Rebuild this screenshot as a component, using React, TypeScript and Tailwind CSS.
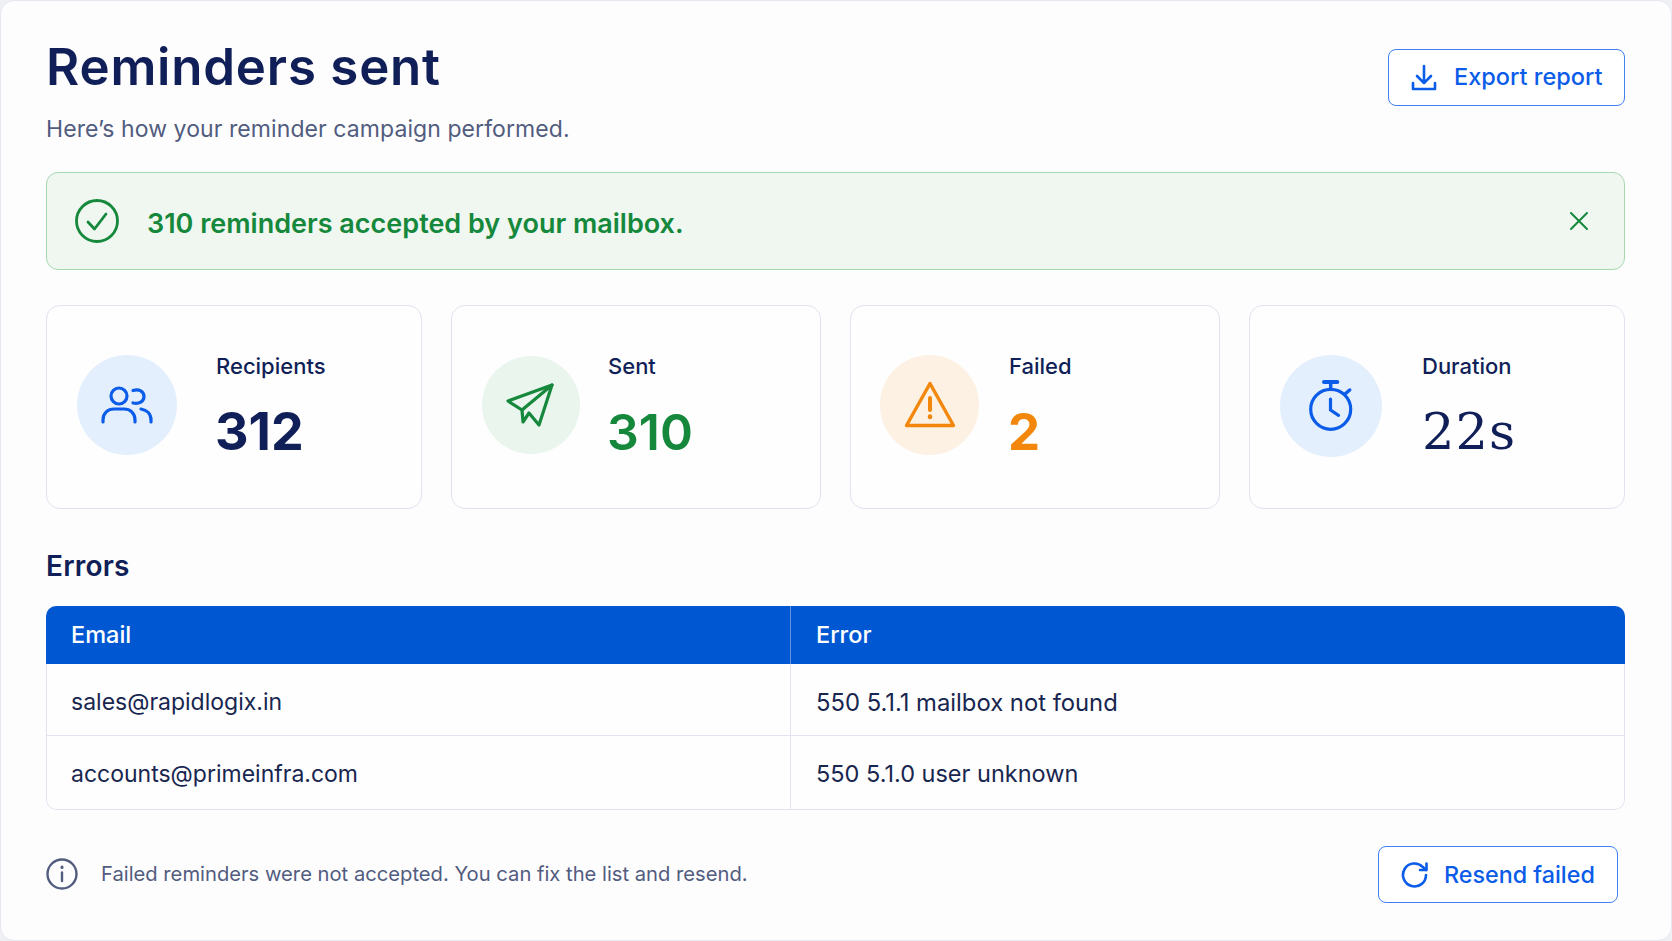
import React from 'react';

const navy = 'text-[#101f57]';

interface StatProps {
  label: string;
  value: string;
  textLeft: string;
  circle: string;
  valueClass: string;
  icon: React.ReactNode;
}

function UsersIcon() {
  return (
    <svg width="52" height="38" viewBox="0 0 52 38" fill="none" stroke="#0b5ce8" strokeWidth="3.2" strokeLinecap="round">
      <circle cx="18" cy="10" r="8" />
      <path d="M32 4.5c6-2 11 1 11 6s-5 8-11 6.5" />
      <path d="M2 36v-2c0-7 5-11 11-11h10c6 0 11 4 11 11v2" />
      <path d="M40 23c6 1 10 5 10 11v2" />
    </svg>
  );
}

function PlaneIcon() {
  return (
    <svg width="50" height="46" viewBox="0 0 50 46" fill="none" stroke="#15883c" strokeWidth="3.2" strokeLinejoin="round" strokeLinecap="round">
      <path d="M46 3 2 19l14 9 1 12 6-9 10 12z" />
      <path d="M46 3 16 28" />
    </svg>
  );
}

function AlertIcon() {
  return (
    <svg width="52" height="48" viewBox="0 0 52 48" fill="none" stroke="#f2870c" strokeWidth="3.4" strokeLinejoin="round" strokeLinecap="round">
      <path d="M26 2.5 2.5 44.5h47z" />
      <path d="M26 17v12" strokeWidth="4" />
      <path d="M26 35.5v.5" strokeWidth="4.5" />
    </svg>
  );
}

function TimerIcon() {
  return (
    <svg width="46" height="52" viewBox="0 0 46 52" fill="none" stroke="#0b5ce8" strokeWidth="3.2" strokeLinecap="round">
      <circle cx="22.7" cy="29.3" r="20" />
      <path d="M16 2h13.3" strokeWidth="4" />
      <path d="M22.7 3v6" strokeWidth="3.5" />
      <path d="m37 14 4.7-4" strokeWidth="3.5" />
      <path d="M22.5 19v11l8 5.3" />
    </svg>
  );
}

function Stat({ label, value, textLeft, circle, valueClass, icon }: StatProps) {
  return (
    <div className="h-[204px] rounded-[14px] border border-[#e1e3f0] bg-white/60">
      <div className="flex h-full items-start pt-[49px]">
        <div className={circle}>{icon}</div>
        <div className={textLeft}>
          <div className={`mt-[-4px] text-[22px] leading-[30px] font-medium ${navy}`}>{label}</div>
          <div className={valueClass}>{value}</div>
        </div>
      </div>
    </div>
  );
}

export default function App() {
  return (
    <div className="h-[941px] w-full overflow-hidden bg-[#eef0f4] font-['Inter',sans-serif]">
      <div className="h-[941px] w-full rounded-[14px] border border-[#e6e8ef] bg-[#fdfdfe] pt-[35px] pr-[46px] pl-[45px]">
        <header className="flex items-start justify-between">
          <div>
            <h1 className={`text-[51px] leading-[62px] font-semibold tracking-[0.8px] ${navy}`}>Reminders sent</h1>
            <p className="mt-[16px] text-[23px] leading-[30px] tracking-[0.08px] text-[#525c7e]">Here’s how your reminder campaign performed.</p>
          </div>
          <button className="mt-[13px] flex h-[57px] w-[237px] items-center rounded-[8px] border-[1.5px] border-[#3f80f3] bg-white pl-[21px] text-[23.5px] font-medium text-[#0b5ce8]">
            <svg width="28" height="28" viewBox="0 0 28 28" fill="none" stroke="#0b5ce8" strokeWidth="2.6" strokeLinecap="round" strokeLinejoin="round">
              <path d="M14 2v17M7 12l7 7 7-7" />
              <path d="M3 19v6h22v-6" />
            </svg>
            <span className="ml-[16px] pb-[2px]">Export report</span>
          </button>
        </header>

        <div className="mt-[28px] flex h-[98px] items-center rounded-[12px] border border-[#a6d8b0] bg-[#eff7f0] pr-[35px] pl-[28px]">
          <svg width="44" height="44" viewBox="0 0 44 44" fill="none" stroke="#15883c" strokeWidth="2.8" strokeLinecap="round" strokeLinejoin="round">
            <circle cx="22" cy="22" r="20.5" />
            <path d="m13 23 6.5 7L31 15" />
          </svg>
          <span className="ml-[28px] pt-[7px] text-[27px] font-semibold text-[#15883c]">310 reminders accepted by your mailbox.</span>
          <svg className="ml-auto" width="20" height="20" viewBox="0 0 20 20" fill="none" stroke="#15883c" strokeWidth="2" strokeLinecap="round">
            <path d="m2 2 16 16M18 2 2 18" />
          </svg>
        </div>

        <div className="mt-[35px] grid grid-cols-[376px_370px_370px_376px] justify-between">
          <Stat
            label="Recipients"
            value="312"
            icon={<UsersIcon />}
            circle="ml-[30px] flex h-[100px] w-[100px] shrink-0 items-center justify-center rounded-full bg-[#e4effd]"
            textLeft="ml-[39px]"
            valueClass={`mt-[20px] -ml-[1px] text-[52px] leading-[62px] font-bold ${navy}`}
          />
          <Stat
            label="Sent"
            value="310"
            icon={<PlaneIcon />}
            circle="mt-[1px] ml-[30px] flex h-[98px] w-[98px] shrink-0 items-center justify-center rounded-full bg-[#eaf5ed]"
            textLeft="ml-[28px]"
            valueClass="mt-[20px] -ml-[1px] text-[50px] leading-[62px] font-semibold text-[#15883c]"
          />
          <Stat
            label="Failed"
            value="2"
            icon={<AlertIcon />}
            circle="ml-[29px] flex h-[100px] w-[99px] shrink-0 items-center justify-center rounded-full bg-[#fdf1e4]"
            textLeft="ml-[30px]"
            valueClass="mt-[20px] -ml-[1px] text-[51px] leading-[62px] font-bold text-[#f2870c]"
          />
          <Stat
            label="Duration"
            value="22s"
            icon={<TimerIcon />}
            circle="ml-[30px] flex h-[102px] w-[102px] shrink-0 items-center justify-center rounded-full bg-[#e4effd]"
            textLeft="ml-[40px]"
            valueClass={`mt-[20px] font-['DejaVu_Serif',serif] text-[51px] leading-[62px] tracking-[1px] ${navy}`}
          />
        </div>

        <h2 className={`mt-[39px] text-[28px] leading-[36px] font-semibold tracking-[0.2px] ${navy}`}>Errors</h2>

        <div className="mt-[22px] overflow-hidden rounded-[10px] bg-white/60">
          <div className="grid h-[58px] grid-cols-[745px_1fr] bg-[#0057d2] text-[23.5px] font-medium text-white">
            <div className="flex items-center border-r border-[#5f93e2] pl-[25px]">Email</div>
            <div className="flex items-center pl-[25px]">Error</div>
          </div>
          <div className="grid h-[72px] grid-cols-[744px_1fr] border-x border-b border-[#e1e3f0] text-[#18264f]">
            <div className="flex items-center border-r border-[#e1e3f0] pt-[6px] pl-[24px] text-[23px]">sales@rapidlogix.in</div>
            <div className="flex items-center pt-[6px] pl-[25px] text-[23.8px]">550 5.1.1 mailbox not found</div>
          </div>
          <div className="grid h-[74px] grid-cols-[744px_1fr] rounded-b-[10px] border-x border-b border-[#e1e3f0] text-[#18264f]">
            <div className="flex items-center border-r border-[#e1e3f0] pt-[4px] pl-[24px] text-[23px]">accounts@primeinfra.com</div>
            <div className="flex items-center pt-[2px] pl-[25px] text-[23.5px]">550 5.1.0 user unknown</div>
          </div>
        </div>

        <footer className="mt-[36px] flex items-center pr-[7px]">
          <svg className="mb-[2px]" width="32" height="32" viewBox="0 0 32 32" fill="none" stroke="#525c7e" strokeWidth="2.4" strokeLinecap="round">
            <circle cx="16" cy="16" r="14.5" />
            <path d="M16 14.5V23" />
            <path d="M16 9v.5" strokeWidth="3" />
          </svg>
          <span className="ml-[23px] text-[20.2px] text-[#525c7e]">Failed reminders were not accepted. You can fix the list and resend.</span>
          <button className="ml-auto flex h-[57px] w-[240px] items-center rounded-[8px] border-[1.5px] border-[#3f80f3] bg-white pl-[22px] text-[23.3px] font-medium text-[#0b5ce8]">
            <svg width="28" height="28" viewBox="0 0 28 28" fill="none" stroke="#0b5ce8" strokeWidth="2.6" strokeLinecap="round" strokeLinejoin="round">
              <path d="M25 14a11.5 11.5 0 1 1-3.4-8.2L25 9" />
              <path d="M25.5 2.5V9H19" />
            </svg>
            <span className="ml-[15px] pt-[2px]">Resend failed</span>
          </button>
        </footer>
      </div>
    </div>
  );
}
